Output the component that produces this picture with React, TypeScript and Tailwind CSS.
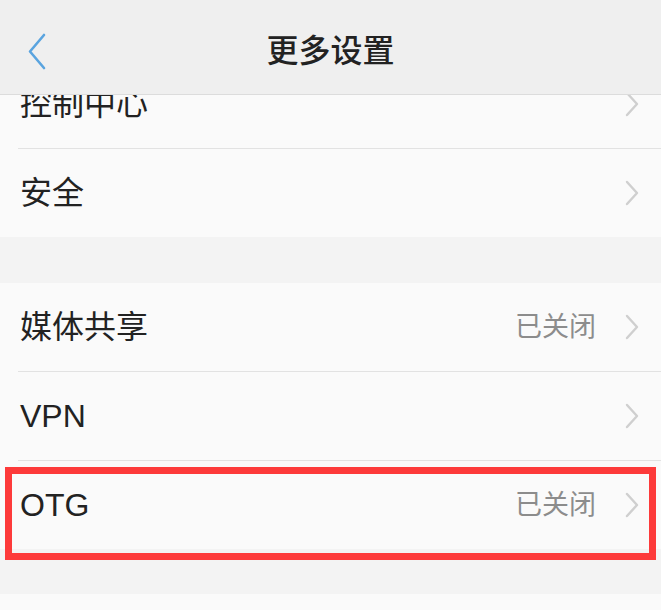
import React from "react";

const font = { fontFamily: '"Liberation Sans", "Noto Sans CJK SC", sans-serif' };

function Chevron() {
  return (
    <svg width="16" height="26" viewBox="0 0 16 26" className="shrink-0">
      <path d="M3 2 L13 13 L3 24" fill="none" stroke="#cfcfcf" strokeWidth="2.4" strokeLinecap="round" strokeLinejoin="round" />
    </svg>
  );
}

function Row({ label, value, divider = true, className = "" }: { label: string; value?: string; divider?: boolean; className?: string }) {
  return (
    <div className={`bg-[#fafafa] ${className}`}>
      <div className="h-[88px] flex items-center pl-[20px] pr-[21px]">
        <span className="text-[32px] text-[#222222] flex-1 leading-none">{label}</span>
        {value && <span className="text-[27px] text-[#8c8c8c] mr-[28px] leading-none">{value}</span>}
        <Chevron />
      </div>
      {divider && <div className="ml-[18px] h-[1px] bg-[#e2e2e2]" />}
    </div>
  );
}

export default function App() {
  return (
    <div className="w-[661px] h-[610px] overflow-hidden bg-[#f3f3f3] relative" style={font}>
      <div className="h-[95px] bg-[#efefef] border-b border-[#dcdcdc] flex items-center justify-center relative z-10">
        <svg width="24" height="40" viewBox="0 0 24 40" className="absolute left-[25px] top-[32px]">
          <path d="M19 3 L5 19.5 L19 36" fill="none" stroke="#5aa4df" strokeWidth="2.6" strokeLinecap="round" strokeLinejoin="round" />
        </svg>
        <span className="text-[32px] font-medium text-[#222222] leading-none mt-[8px]">更多设置</span>
      </div>
      <div className="flex flex-col">
        <Row label="控制中心" className="-mt-[35px]" />
        <Row label="安全" divider={false} />
        <div className="h-[46px] bg-[#f3f3f3]" />
        <Row label="媒体共享" value="已关闭" />
        <Row label="VPN" />
        <div className="relative">
          <Row label="OTG" value="已关闭" divider={false} />
          <div className="absolute left-[5px] right-[5px] top-[6px] h-[93px] border-[7px] border-[#fd3a3a]" />
        </div>
        <div className="h-[45px] bg-[#f3f3f3]" />
        <div className="h-[40px] bg-[#fafafa]" />
      </div>
    </div>
  );
}
